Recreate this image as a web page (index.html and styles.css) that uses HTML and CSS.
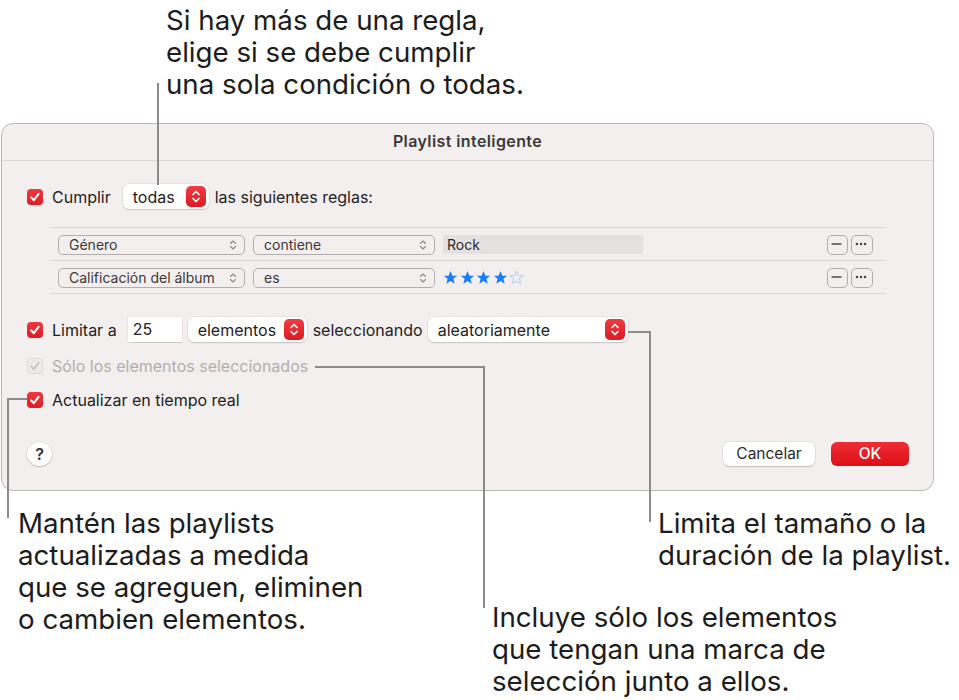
FILE: index.html
```html
<!DOCTYPE html>
<html lang="es">
<head>
    <meta charset="UTF-8">
    <meta name="viewport" content="width=device-width, initial-scale=1.0">
    <title>Playlist inteligente</title>
    <link rel="stylesheet" href="styles.css">
</head>
<body>
    <div class="page">
        <p class="note note-top">Si hay más de una regla,<br>elige si se debe cumplir<br>una sola condición o todas.</p>

        <div class="dialog">
            <div class="titlebar">Playlist inteligente</div>
            <div class="dialog-body">
                <div class="row">
                    <span class="check"><svg viewBox="0 0 16 16"><path d="M4.2 8.4l2.6 2.8 4.8-6.4"/></svg></span>
                    <span class="label">Cumplir</span>
                    <span class="popup popup-todas">todas<span class="stepper"><svg viewBox="0 0 20 21"><path d="M7 8.5l3-3 3 3M7 12.5l3 3 3-3"/></svg></span></span>
                    <span class="label">las siguientes reglas:</span>
                </div>

                <div class="rules">
                    <div class="rule">
                        <span class="select select-field">Género<svg class="chev" viewBox="0 0 8 12"><path d="M1.5 4.5l2.5-2.5 2.5 2.5M1.5 7.5l2.5 2.5 2.5-2.5"/></svg></span>
                        <span class="select select-op">contiene<svg class="chev" viewBox="0 0 8 12"><path d="M1.5 4.5l2.5-2.5 2.5 2.5M1.5 7.5l2.5 2.5 2.5-2.5"/></svg></span>
                        <span class="value">Rock</span>
                        <span class="rule-btns">
                            <span class="mini-btn"><svg viewBox="0 0 21 20"><path d="M5 10h11"/></svg></span>
                            <span class="mini-btn"><svg viewBox="0 0 22 20"><circle cx="6.5" cy="10" r="1.4"/><circle cx="11" cy="10" r="1.4"/><circle cx="15.5" cy="10" r="1.4"/></svg></span>
                        </span>
                    </div>
                    <div class="rule">
                        <span class="select select-field">Calificación del álbum<svg class="chev" viewBox="0 0 8 12"><path d="M1.5 4.5l2.5-2.5 2.5 2.5M1.5 7.5l2.5 2.5 2.5-2.5"/></svg></span>
                        <span class="select select-op">es<svg class="chev" viewBox="0 0 8 12"><path d="M1.5 4.5l2.5-2.5 2.5 2.5M1.5 7.5l2.5 2.5 2.5-2.5"/></svg></span>
                        <span class="stars">
                            <svg class="star" viewBox="0 0 16 16"><polygon points="8,1 10,6 15.2,6.2 11.1,9.4 12.5,14.6 8,11.6 3.5,14.6 4.9,9.4 0.8,6.2 6,6"/></svg>
                            <svg class="star" viewBox="0 0 16 16"><polygon points="8,1 10,6 15.2,6.2 11.1,9.4 12.5,14.6 8,11.6 3.5,14.6 4.9,9.4 0.8,6.2 6,6"/></svg>
                            <svg class="star" viewBox="0 0 16 16"><polygon points="8,1 10,6 15.2,6.2 11.1,9.4 12.5,14.6 8,11.6 3.5,14.6 4.9,9.4 0.8,6.2 6,6"/></svg>
                            <svg class="star" viewBox="0 0 16 16"><polygon points="8,1 10,6 15.2,6.2 11.1,9.4 12.5,14.6 8,11.6 3.5,14.6 4.9,9.4 0.8,6.2 6,6"/></svg>
                            <svg class="star star-empty" viewBox="0 0 16 16"><polygon points="8,1 10,6 15.2,6.2 11.1,9.4 12.5,14.6 8,11.6 3.5,14.6 4.9,9.4 0.8,6.2 6,6"/></svg>
                        </span>
                        <span class="rule-btns">
                            <span class="mini-btn"><svg viewBox="0 0 21 20"><path d="M5 10h11"/></svg></span>
                            <span class="mini-btn"><svg viewBox="0 0 22 20"><circle cx="6.5" cy="10" r="1.4"/><circle cx="11" cy="10" r="1.4"/><circle cx="15.5" cy="10" r="1.4"/></svg></span>
                        </span>
                    </div>
                </div>

                <div class="row row-limit">
                    <span class="check"><svg viewBox="0 0 16 16"><path d="M4.2 8.4l2.6 2.8 4.8-6.4"/></svg></span>
                    <span class="label">Limitar a</span>
                    <span class="number">25</span>
                    <span class="popup popup-unit">elementos<span class="stepper"><svg viewBox="0 0 20 21"><path d="M7 8.5l3-3 3 3M7 12.5l3 3 3-3"/></svg></span></span>
                    <span class="label">seleccionando</span>
                    <span class="popup popup-order">aleatoriamente<span class="stepper"><svg viewBox="0 0 20 21"><path d="M7 8.5l3-3 3 3M7 12.5l3 3 3-3"/></svg></span></span>
                </div>

                <div class="row row-selected">
                    <span class="check check-off"><svg viewBox="0 0 16 16"><path d="M4.2 8.4l2.6 2.8 4.8-6.4"/></svg></span>
                    <span class="label label-off">Sólo los elementos seleccionados</span>
                </div>

                <div class="row row-live">
                    <span class="check"><svg viewBox="0 0 16 16"><path d="M4.2 8.4l2.6 2.8 4.8-6.4"/></svg></span>
                    <span class="label">Actualizar en tiempo real</span>
                </div>

                <div class="footer">
                    <span class="help">?</span>
                    <span class="btn btn-cancel">Cancelar</span>
                    <span class="btn btn-ok">OK</span>
                </div>
            </div>
        </div>

        <div class="notes-bottom">
            <p class="note note-live">Mantén las playlists<br>actualizadas a medida<br>que se agreguen, eliminen<br>o cambien elementos.</p>
            <p class="note note-limit">Limita el tamaño o la<br>duración de la playlist.</p>
            <p class="note note-selected">Incluye sólo los elementos<br>que tengan una marca de<br>selección junto a ellos.</p>
        </div>

        <!-- leader lines for the callouts -->
        <svg class="leaders" viewBox="0 0 959 700">
            <polyline points="158,83 158,185"/>
            <polyline points="27,399 8,399 8,518"/>
            <polyline points="315,367 484,367 484,608"/>
            <polyline points="628,332 650,332 650,522"/>
        </svg>
    </div>
</body>
</html>
```

FILE: styles.css
```css
* {
    box-sizing: border-box;
}
body {
    margin: 0;
    background-color: #fff;
    font-family: Inter, "Liberation Sans", sans-serif;
    color: #222;
}
.page {
    position: relative;
    width: 959px;
    height: 700px;
    overflow: hidden;
}
.note {
    margin: 0;
    font-size: 27.7px;
    line-height: 32px;
    color: #1c1c1c;
    white-space: nowrap;
}
.note-top {
    padding: 4px 0 0 166px;
}
.dialog {
    margin: 23px 0 0 1px;
    width: 933px;
    height: 368px;
    background-color: #f4efef;
    border: 1px solid #bcb7b7;
    border-radius: 12px;
}
.titlebar {
    height: 37px;
    border-bottom: 1px solid #dcd7d7;
    text-align: center;
    font-size: 16px;
    font-weight: 600;
    letter-spacing: 0.4px;
    line-height: 35px;
    color: #3b3838;
}
.dialog-body {
    padding: 23px 24px 0 25px;
}
.row {
    display: flex;
    align-items: center;
    height: 25px;
    font-size: 16px;
}
.label {
    margin-left: 9px;
    white-space: nowrap;
}
.check {
    width: 16px;
    height: 16px;
    flex: none;
    border-radius: 4px;
    background: linear-gradient(#ee3a40, #de1b22);
}
.check svg {
    display: block;
    width: 16px;
    height: 16px;
    fill: none;
    stroke: #fff;
    stroke-width: 2;
    stroke-linecap: round;
    stroke-linejoin: round;
}
.check-off {
    background: #efeaea;
    box-shadow: inset 0 0 0 1px #e0dbdb;
}
.check-off svg {
    stroke: #c4bfbf;
    stroke-width: 1.6;
}
.label-off {
    color: #b3aeae;
}
.popup {
    position: relative;
    display: flex;
    align-items: center;
    height: 25px;
    padding-left: 10px;
    margin-left: 12px;
    background-color: #fff;
    border-radius: 6px;
    box-shadow: 0 0 0 0.5px rgba(0, 0, 0, 0.1), 0 1px 1.5px rgba(0, 0, 0, 0.14);
}
.popup + .label {
    margin-left: 6px;
}
.popup-todas {
    width: 86px;
}
.popup-unit {
    width: 119px;
    margin-left: 6px;
}
.popup-order {
    width: 200px;
    margin-left: 5px;
}
.stepper {
    position: absolute;
    right: 3px;
    top: 2px;
    width: 20px;
    height: 21px;
    border-radius: 5px;
    background: linear-gradient(#ef3c42, #dd1a21);
}
.stepper svg {
    display: block;
    width: 20px;
    height: 21px;
    fill: none;
    stroke: #fff;
    stroke-width: 1.7;
    stroke-linecap: round;
    stroke-linejoin: round;
}
.number {
    width: 54px;
    height: 25px;
    margin-left: 11px;
    padding-left: 5px;
    line-height: 25px;
    background-color: #fff;
    box-shadow: 0 0 0 0.5px rgba(0, 0, 0, 0.06), 0 0.5px 1px rgba(0, 0, 0, 0.15);
}
.rules {
    margin: 18px 23px 0 23px;
    border-bottom: 1px solid #dcd7d7;
}
.rule {
    display: flex;
    align-items: center;
    height: 33px;
    padding: 1px 13px 0 8px;
    border-top: 1px solid #dcd7d7;
    font-size: 14px;
}
.select {
    position: relative;
    display: flex;
    align-items: center;
    height: 20px;
    padding-left: 10px;
    border: 1px solid #b3aeae;
    border-radius: 5px;
    color: #3a3737;
    white-space: nowrap;
}
.select-field {
    width: 187px;
}
.select-op {
    width: 182px;
    margin-left: 8px;
}
.chev {
    position: absolute;
    right: 7px;
    top: 3px;
    width: 8px;
    height: 12px;
    fill: none;
    stroke: #8d8888;
    stroke-width: 1.1;
    stroke-linecap: round;
    stroke-linejoin: round;
}
.value {
    width: 200px;
    height: 19px;
    margin-left: 8px;
    padding-left: 4px;
    line-height: 20px;
    background-color: #e6e1e1;
    color: #2a2a2a;
}
.stars {
    display: flex;
    gap: 1.5px;
    margin-left: 8px;
}
.star {
    width: 15px;
    height: 15px;
    fill: #1a7df6;
}
.star-empty {
    fill: none;
    stroke: #a9cdfa;
    stroke-width: 1;
}
.rule-btns {
    display: flex;
    gap: 3px;
    margin-left: auto;
}
.mini-btn {
    width: 21px;
    height: 20px;
    border: 1px solid #b3aeae;
    border-radius: 5px;
}
.mini-btn + .mini-btn {
    width: 22px;
}
.mini-btn svg {
    display: block;
    width: 100%;
    height: 100%;
    fill: #444;
    stroke: #444;
    stroke-width: 1.6;
    margin: -1px 0 0 -1px;
}
.mini-btn svg circle {
    stroke: none;
}
.row-limit {
    margin-top: 23px;
}
.row-selected {
    margin-top: 11px;
}
.row-live {
    margin-top: 9px;
}
.footer {
    display: flex;
    align-items: center;
    margin-top: 30px;
    height: 24px;
    font-size: 15.5px;
}
.help {
    width: 25px;
    height: 24px;
    border-radius: 50%;
    background-color: #fff;
    box-shadow: 0 0 0 0.5px rgba(0, 0, 0, 0.12), 0 1px 1.5px rgba(0, 0, 0, 0.18);
    text-align: center;
    line-height: 24px;
    font-weight: 600;
    font-size: 16px;
    color: #333;
}
.btn {
    height: 24px;
    line-height: 24px;
    text-align: center;
    border-radius: 6px;
}
.btn-cancel {
    width: 92px;
    margin-left: auto;
    background-color: #fff;
    color: #2b2b2b;
    box-shadow: 0 0 0 0.5px rgba(0, 0, 0, 0.1), 0 1px 1.5px rgba(0, 0, 0, 0.16);
}
.btn-ok {
    width: 78px;
    margin-left: 16px;
    background: linear-gradient(#ee2d35, #dc0f17);
    color: #fff;
    font-weight: 500;
}
.notes-bottom {
    display: grid;
    grid-template-columns: 474px 166px 1fr;
    grid-template-rows: 94px auto;
    margin-top: 16px;
    padding-left: 18px;
}
.note-live {
    grid-column: 1;
    grid-row: 1 / 3;
}
.note-limit {
    grid-column: 3;
    grid-row: 1;
}
.note-selected {
    grid-column: 2;
    grid-row: 2;
}
.leaders {
    position: absolute;
    left: 0;
    top: 0;
    width: 959px;
    height: 700px;
    pointer-events: none;
    fill: none;
    stroke: #8b8b8b;
    stroke-width: 2;
}
```
